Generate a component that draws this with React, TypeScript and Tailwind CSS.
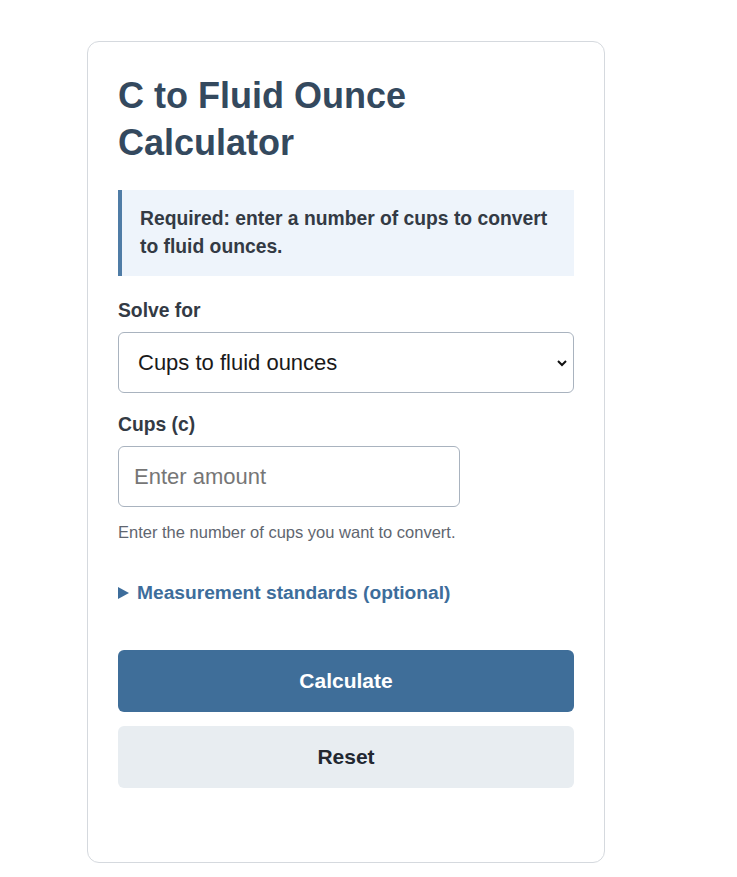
import { useState } from 'react';

export default function App() {
  const [mode, setMode] = useState('c-to-floz');
  const [cups, setCups] = useState('');

  return (
    <div className="min-h-screen bg-white pt-[41px] pl-[87px] font-['Liberation_Sans',Arial,sans-serif]">
      <div className="w-[518px] rounded-xl border border-[#d5d9de] bg-white px-[30px] pt-[30px] pb-[74px]">
        <h1 className="text-[36px] font-bold leading-[47px] text-[#34495e]">
          C to Fluid Ounce Calculator
        </h1>

        {/* Required-field notice */}
        <div className="mt-[24px] border-l-4 border-[#4f7ca6] bg-[#eef4fb] pt-[15px] pb-[16px] pl-[18px] pr-4">
          <p className="text-[19.3px] font-bold leading-[27.5px] text-[#333a44]">
            Required: enter a number of cups to convert to fluid ounces.
          </p>
        </div>

        <label className="mt-[23px] block text-[19.3px] font-bold leading-6 text-[#333a44]">Solve for</label>
        <div className="relative mt-[9px]">
          <select
            value={mode}
            onChange={(e) => setMode(e.target.value)}
            className="block h-[61px] w-full appearance-none rounded-md border border-[#a9b3bf] bg-white pl-[19px] text-[22px] text-[#1a1a1a] outline-none"
          >
            <option value="c-to-floz">Cups to fluid ounces</option>
            <option value="floz-to-c">Fluid ounces to cups</option>
          </select>
          <svg
            className="pointer-events-none absolute right-[6px] top-1/2 h-3 w-3 -translate-y-1/2"
            viewBox="0 0 12 12"
            fill="none"
            stroke="#111"
            strokeWidth="2"
          >
            <path d="M2 4l4 4 4-4" />
          </svg>
        </div>

        <label className="mt-[20px] block text-[19.3px] font-bold leading-6 text-[#333a44]">Cups (c)</label>
        <input
          type="text"
          value={cups}
          onChange={(e) => setCups(e.target.value)}
          placeholder="Enter amount"
          className="mt-[9px] block h-[61px] w-[342px] rounded-md border border-[#a9b3bf] bg-white px-[15px] text-[22px] text-[#1a1a1a] outline-none placeholder:text-[#767676]"
        />
        <p className="mt-[15px] text-[16.5px] leading-5 text-[#5f6670]">Enter the number of cups you want to convert.</p>

        <div className="mt-[39px] flex items-center gap-[8px] text-[19.2px] font-bold leading-6 text-[#3d6d9b]">
          <svg className="h-3 w-[11px]" viewBox="0 0 11 12" fill="#3d6d9b">
            <path d="M0 0l11 6-11 6z" />
          </svg>
          <span>Measurement standards (optional)</span>
        </div>

        <div className="mt-[45px] flex flex-col gap-[14px]">
          <button className="h-[62px] w-full rounded-md bg-[#3f6e99] text-[21px] font-bold text-white">Calculate</button>
          <button
            onClick={() => setCups('')}
            className="h-[62px] w-full rounded-md bg-[#e8edf1] text-[21px] font-bold text-[#222831]"
          >
            Reset
          </button>
        </div>
      </div>
    </div>
  );
}
